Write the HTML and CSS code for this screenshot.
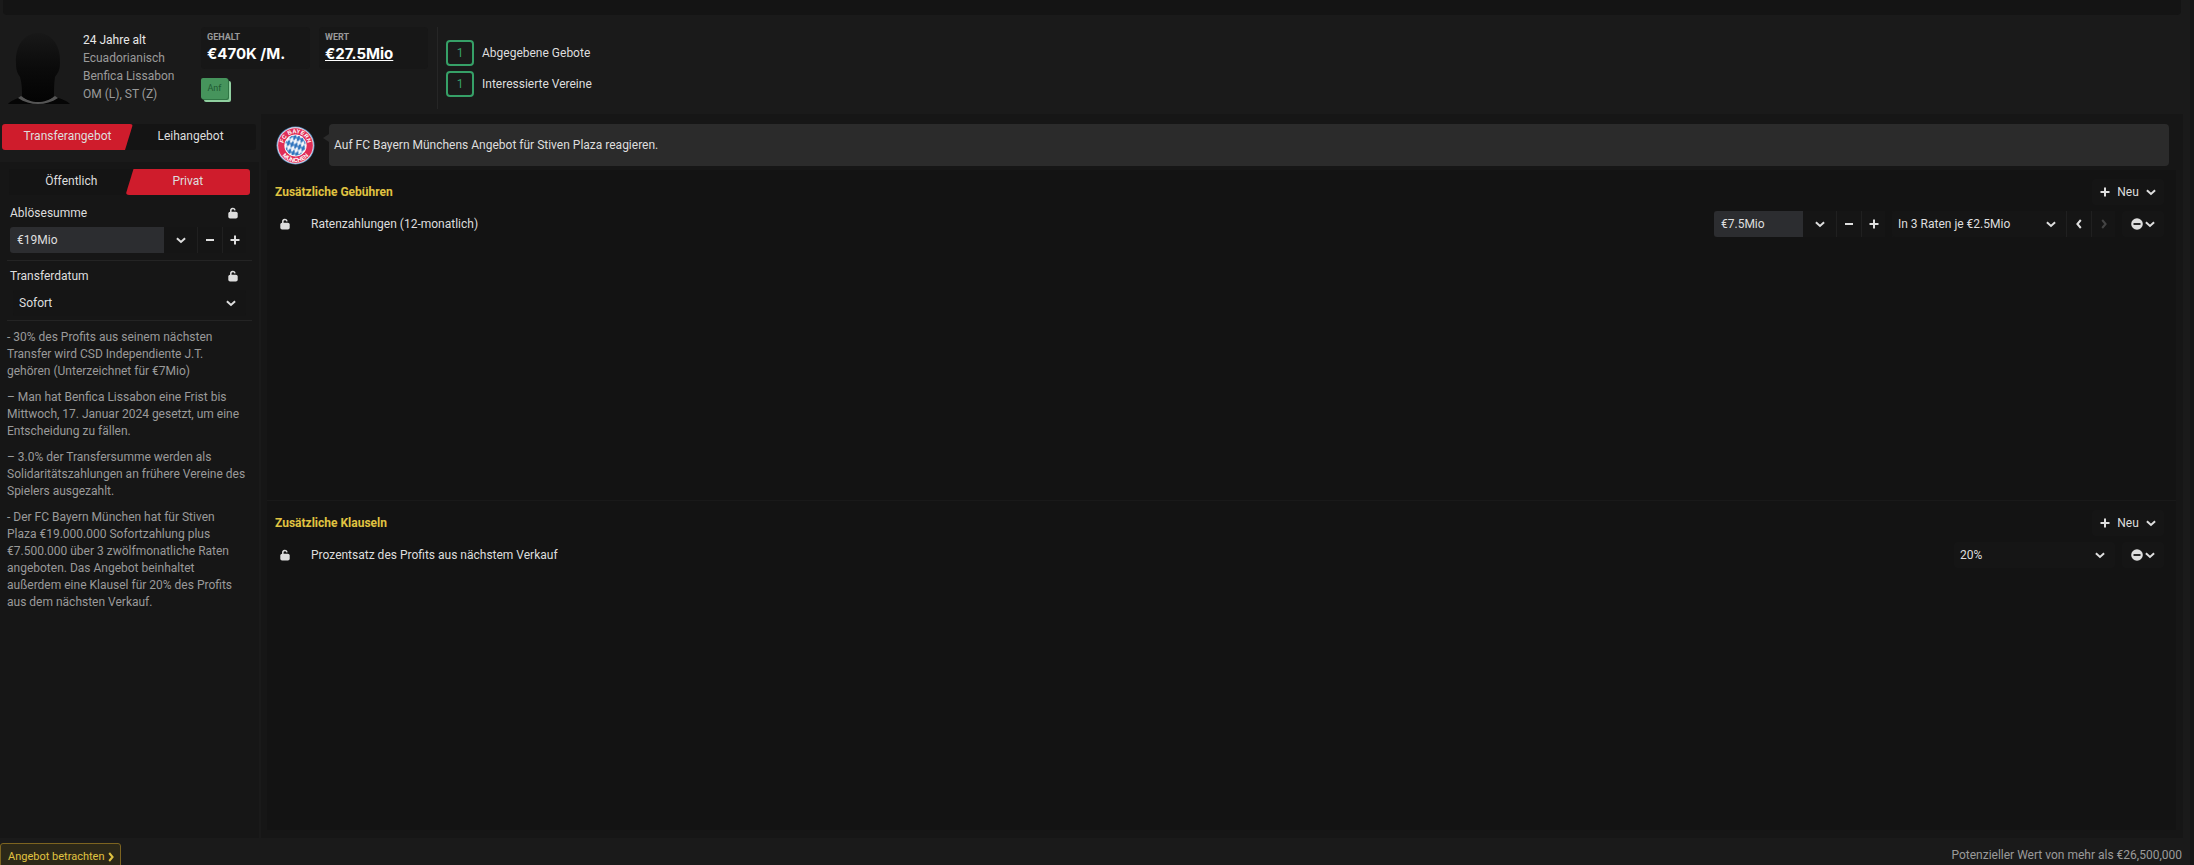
FILE: index.html
```
<!DOCTYPE html>
<html lang="de">
<head>
    <meta charset="UTF-8">
    <meta name="viewport" content="width=device-width, initial-scale=1.0">
    <title>Transferangebot</title>
    <link rel="stylesheet" href="styles.css">
</head>
<body>
    <!-- Shared icons -->
    <svg class="sprite" aria-hidden="true">
        <symbol id="chevron" viewBox="0 0 10 10"><path d="M.9 3.3 5 6.9 9.1 3.3"/></symbol>
        <symbol id="left" viewBox="0 0 10 10"><path d="M6.8 1 3.4 5 6.8 9"/></symbol>
        <symbol id="right" viewBox="0 0 10 10"><path d="M3.2 1 6.6 5 3.2 9"/></symbol>
        <symbol id="plus" viewBox="0 0 10 10"><path d="M5 .5v9M.5 5h9"/></symbol>
        <symbol id="minus" viewBox="0 0 10 10"><path d="M1 5h8"/></symbol>
        <symbol id="lock" viewBox="0 0 10 12"><rect x="0.3" y="4.8" width="9.4" height="6.7" rx="1.8" fill="currentColor" stroke="none"/><path d="M2.8 5.5V3.8a2.1 2.1 0 0 1 4.2-.4" stroke-width="1.5"/></symbol>
        <symbol id="remove" viewBox="0 0 12 12"><circle cx="6" cy="6" r="5.8" fill="currentColor" stroke="none"/><path d="M2.5 6h7" stroke="#131313" stroke-width="1.8"/></symbol>
    </svg>

    <div class="topbar"></div>

    <header class="player">
        <svg class="portrait" viewBox="0 0 62 72" aria-hidden="true">
            <defs>
                <linearGradient id="shade" x1="0" y1="0" x2="0" y2="1">
                    <stop offset="0" stop-color="#181818"/>
                    <stop offset="0.5" stop-color="#0b0b0b"/>
                    <stop offset="1" stop-color="#030303"/>
                </linearGradient>
            </defs>
            <path d="M0 71c2-3 8-5 13-7h35c5 2 12 4 14 7z" fill="#050505"/>
            <path d="M10 65c6 4 13 6 20 6s14-2 20-6l-3-2c-4 3-10 5-17 5s-13-2-17-5z" fill="#555"/>
            <path d="M8 30C7 12 17 0 30 0s23 12 22 30c0 8-3 11-5 14-1 7-1 13-1 19-4 4-10 6-16 6s-12-2-16-6c0-6 0-12-2-19-2-3-4-6-4-14z" fill="url(#shade)"/>
        </svg>
        <ul class="bio">
            <li class="bright">24 Jahre alt</li>
            <li>Ecuadorianisch</li>
            <li>Benfica Lissabon</li>
            <li>OM (L), ST (Z)</li>
        </ul>
        <div class="stats">
            <div class="stat">
                <span class="stat-label">GEHALT</span>
                <strong>€470K /M.</strong>
            </div>
            <div class="stat">
                <span class="stat-label">WERT</span>
                <a href="#">€27.5Mio</a>
            </div>
            <span class="tag">Anf</span>
        </div>
        <ul class="interest">
            <li><span class="count">1</span>Abgegebene Gebote</li>
            <li><span class="count">1</span>Interessierte Vereine</li>
        </ul>
    </header>

    <div class="content">
        <aside class="sidebar">
            <div class="tabs">
                <button class="tab first active">Transferangebot</button>
                <button class="tab">Leihangebot</button>
            </div>
            <div class="side-panel">
                <div class="tabs">
                    <button class="tab">Öffentlich</button>
                    <button class="tab last active">Privat</button>
                </div>
                <div class="field">
                    <div class="field-head">
                        <label for="fee">Ablösesumme</label>
                        <svg class="icon lock"><use href="#lock"/></svg>
                    </div>
                    <div class="stepper">
                        <input id="fee" type="text" value="€19Mio">
                        <button class="drop" aria-label="Auswählen"><svg class="icon"><use href="#chevron"/></svg></button>
                        <button aria-label="Weniger"><svg class="icon"><use href="#minus"/></svg></button>
                        <button aria-label="Mehr"><svg class="icon"><use href="#plus"/></svg></button>
                    </div>
                </div>
                <div class="field">
                    <div class="field-head">
                        <label for="date">Transferdatum</label>
                        <svg class="icon lock"><use href="#lock"/></svg>
                    </div>
                    <div class="select">
                        <select id="date"><option>Sofort</option></select>
                        <svg class="icon"><use href="#chevron"/></svg>
                    </div>
                </div>
                <div class="notes">
                    <p>- 30% des Profits aus seinem nächsten<br>Transfer wird CSD Independiente J.T.<br>gehören (Unterzeichnet für €7Mio)</p>
                    <p>– Man hat Benfica Lissabon eine Frist bis<br>Mittwoch, 17. Januar 2024 gesetzt, um eine<br>Entscheidung zu fällen.</p>
                    <p>– 3.0% der Transfersumme werden als<br>Solidaritätszahlungen an frühere Vereine des<br>Spielers ausgezahlt.</p>
                    <p>- Der FC Bayern München hat für Stiven<br>Plaza €19.000.000 Sofortzahlung plus<br>€7.500.000 über 3 zwölfmonatliche Raten<br>angeboten. Das Angebot beinhaltet<br>außerdem eine Klausel für 20% des Profits<br>aus dem nächsten Verkauf.</p>
                </div>
            </div>
        </aside>

        <main class="main">
            <div class="message">
                <svg class="crest" viewBox="0 0 40 40" role="img" aria-label="FC Bayern München">
                    <defs>
                        <pattern id="diamonds" width="4" height="8" patternUnits="userSpaceOnUse" patternTransform="rotate(20)">
                            <rect width="4" height="8" fill="#f3f6fb"/>
                            <path d="M2 0 4 4 2 8 0 4z" fill="#2f74bd"/>
                        </pattern>
                        <path id="arc-top" d="M7.4 20a12.6 12.6 0 0 1 25.2 0"/>
                        <path id="arc-bottom" d="M3 20a17 17 0 0 0 34 0"/>
                    </defs>
                    <circle cx="20" cy="20" r="19.5" fill="#5f8fc0"/>
                    <circle cx="20" cy="20" r="18.6" fill="#f2e6ea"/>
                    <circle cx="20" cy="20" r="17.8" fill="#e02c56"/>
                    <circle cx="20" cy="20" r="11.4" fill="#fff"/>
                    <circle cx="20" cy="20" r="10.6" fill="url(#diamonds)"/>
                    <text class="crest-text"><textPath href="#arc-top" startOffset="50%">FC BAYERN</textPath></text>
                    <text class="crest-text"><textPath href="#arc-bottom" startOffset="50%">MÜNCHEN</textPath></text>
                </svg>
                <p class="bubble">Auf FC Bayern Münchens Angebot für Stiven Plaza reagieren.</p>
            </div>

            <div class="clauses">
                <section class="group">
                    <div class="group-head">
                        <h2>Zusätzliche Gebühren</h2>
                        <button class="new"><svg class="icon"><use href="#plus"/></svg>Neu<svg class="icon"><use href="#chevron"/></svg></button>
                    </div>
                    <div class="clause">
                        <svg class="icon lock"><use href="#lock"/></svg>
                        <label for="instalments">Ratenzahlungen (12-monatlich)</label>
                        <div class="stepper">
                            <input id="instalments" type="text" value="€7.5Mio">
                            <button class="drop" aria-label="Auswählen"><svg class="icon"><use href="#chevron"/></svg></button>
                            <button aria-label="Weniger"><svg class="icon"><use href="#minus"/></svg></button>
                            <button aria-label="Mehr"><svg class="icon"><use href="#plus"/></svg></button>
                        </div>
                        <div class="stepper">
                            <div class="select">
                                <select aria-label="Raten"><option>In 3 Raten je €2.5Mio</option></select>
                                <svg class="icon"><use href="#chevron"/></svg>
                            </div>
                            <button aria-label="Zurück"><svg class="icon"><use href="#left"/></svg></button>
                            <button aria-label="Weiter" disabled><svg class="icon"><use href="#right"/></svg></button>
                        </div>
                        <button class="remove" aria-label="Entfernen"><svg class="icon round"><use href="#remove"/></svg><svg class="icon"><use href="#chevron"/></svg></button>
                    </div>
                </section>
                <section class="group">
                    <div class="group-head">
                        <h2>Zusätzliche Klauseln</h2>
                        <button class="new"><svg class="icon"><use href="#plus"/></svg>Neu<svg class="icon"><use href="#chevron"/></svg></button>
                    </div>
                    <div class="clause">
                        <svg class="icon lock"><use href="#lock"/></svg>
                        <label for="percent">Prozentsatz des Profits aus nächstem Verkauf</label>
                        <div class="select percent">
                            <select id="percent"><option>20%</option></select>
                            <svg class="icon"><use href="#chevron"/></svg>
                        </div>
                        <button class="remove" aria-label="Entfernen"><svg class="icon round"><use href="#remove"/></svg><svg class="icon"><use href="#chevron"/></svg></button>
                    </div>
                </section>
            </div>
        </main>
    </div>

    <footer>
        <button class="view-offer">Angebot betrachten<svg class="icon"><use href="#right"/></svg></button>
        <p>Potenzieller Wert von mehr als €26,500,000</p>
    </footer>
</body>
</html>
```
FILE: styles.css
```
* {
    box-sizing: border-box;
}

body {
    margin: 0;
    height: 100vh;
    display: flex;
    flex-direction: column;
    overflow: hidden;
    background: #1a1a1a;
    border-right: 4px solid #151515;
    color: #dedede;
    font-family: Roboto, "Liberation Sans", sans-serif;
    font-size: 12px;
    line-height: 18px;
}

ul, p, h2 {
    margin: 0;
    padding: 0;
    list-style: none;
}

button, input, select {
    margin: 0;
    padding: 0;
    border: 0;
    background: none;
    color: inherit;
    font: inherit;
    appearance: none;
}

button {
    display: flex;
    align-items: center;
    justify-content: center;
    cursor: pointer;
}

.sprite {
    display: none;
}

.icon {
    width: 10px;
    height: 10px;
    flex: none;
    fill: none;
    stroke: currentColor;
    stroke-width: 2;
}

.icon.lock {
    height: 12px;
}

.icon.round {
    width: 12px;
    height: 12px;
}

.topbar {
    flex: none;
    height: 15px;
    margin: 0 9px 0 3px;
    background: #141414;
    border-radius: 0 0 4px 4px;
}

/* Player header */
.player {
    flex: none;
    display: flex;
    align-items: flex-start;
    height: 99px;
    padding: 12px 8px 0;
}

.portrait {
    width: 62px;
    height: 72px;
    margin-top: 6px;
}

.bio {
    width: 118px;
    margin: 4px 0 0 13px;
    color: #9a9a9a;
}

.bio .bright {
    color: #e8e8e8;
}

.stats {
    display: grid;
    grid-template-columns: 109px 109px;
    gap: 9px;
}

.stat {
    height: 42px;
    padding: 3px 6px;
    background: #171717;
    border-radius: 4px;
}

.stat-label {
    display: block;
    color: #9a9a9a;
    font-size: 9px;
    font-weight: bold;
    line-height: 15px;
}

.stat strong, .stat a {
    color: #fff;
    font-family: Inter, Roboto, sans-serif;
    font-size: 15px;
    font-weight: bold;
}

.tag {
    width: 27px;
    height: 21px;
    background: #46945c;
    border-radius: 2px;
    box-shadow: 1px 1px #2f7544, 3px 3px #8fcf9f;
    color: #1f5a33;
    font-size: 9px;
    line-height: 20px;
    text-align: center;
}

.interest {
    display: grid;
    align-content: center;
    gap: 5px;
    height: 82px;
    margin-left: 9px;
    padding-left: 8px;
    border-left: 1px solid #262626;
}

.interest li {
    display: flex;
    align-items: center;
    gap: 8px;
}

.count {
    width: 28px;
    height: 26px;
    border: 2px solid #36a067;
    border-radius: 4px;
    color: #36a067;
    line-height: 22px;
    text-align: center;
}

/* Columns */
.content {
    flex: 1;
    display: flex;
    gap: 2px;
    min-height: 0;
}

.sidebar {
    flex: none;
    display: flex;
    flex-direction: column;
    width: 259px;
    padding-top: 10px;
}

.sidebar > .tabs {
    margin: 0 3px 12px 2px;
}

.side-panel {
    flex: 1;
    padding: 7px 7px 0;
    background: #161616;
}

.side-panel > .tabs {
    margin: 0 2px 7px;
}

.tabs {
    display: flex;
    background: #141414;
    border-radius: 3px;
}

.tab {
    flex: 1;
    height: 26px;
    padding-bottom: 2px;
}

.tab.active {
    background: #cf1c2c;
    border-radius: 3px;
}

.tab.first {
    margin-right: -8px;
    clip-path: polygon(0 0, 100% 0, calc(100% - 8px) 100%, 0 100%);
}

.tab.last {
    margin-left: -8px;
    clip-path: polygon(8px 0, 100% 0, 100% 100%, 0 100%);
}

.field {
    padding: 2px 6px 7px 3px;
    border-bottom: 1px solid #242424;
}

.field + .field {
    padding-top: 6px;
    padding-bottom: 4px;
}

.field-head {
    display: flex;
    align-items: center;
    justify-content: space-between;
    height: 18px;
    margin: 0 8px 5px 0;
}

.field .select {
    margin-left: 3px;
}

.stepper {
    display: flex;
    height: 26px;
    background: #151515;
}

.stepper input {
    flex: 1;
    min-width: 0;
    padding-left: 7px;
    background: #2c2d30;
    border-radius: 3px 0 0 3px;
}

.stepper button {
    width: 25px;
    border-left: 1px solid #202020;
}

.stepper button:last-child {
    width: 24px;
}

.stepper .drop {
    width: 33px;
    border-left: 0;
}

.stepper button:disabled {
    color: #444;
}

.select {
    display: grid;
    align-items: center;
    height: 26px;
    background: #151515;
    border-radius: 3px;
}

.select select, .select .icon {
    grid-area: 1 / 1;
}

.select select {
    height: 26px;
    padding-left: 6px;
}

.select .icon {
    justify-self: end;
    margin-right: 10px;
    pointer-events: none;
}

.notes {
    display: grid;
    gap: 9px;
    padding: 8px 0;
    color: #9a9a9a;
    line-height: 17px;
    white-space: nowrap;
}

/* Offer details */
.main {
    flex: 1;
    display: flex;
    flex-direction: column;
    margin-right: 7px;
    padding: 10px 7px 8px 6px;
    background: #161616;
}

.message {
    display: flex;
    align-items: center;
    gap: 14px;
    margin: 0 7px 4px 9px;
}

.crest {
    flex: none;
    width: 39px;
    height: 39px;
}

.crest-text {
    fill: #fff;
    font-family: "Liberation Sans", sans-serif;
    font-size: 6px;
    font-weight: bold;
    text-anchor: middle;
}

.bubble {
    flex: 1;
    position: relative;
    padding: 12px 5px;
    background: #2b2b2b;
    border-radius: 4px;
}

.bubble::before {
    content: '';
    position: absolute;
    top: 10px;
    left: -6px;
    border: solid transparent;
    border-width: 4px 6px 4px 0;
    border-right-color: #2b2b2b;
}

.clauses {
    flex: 1;
    display: flex;
    flex-direction: column;
    background: #131313;
}

.group {
    flex: 1;
    padding: 9px 12px 0 8px;
}

.group + .group {
    border-top: 1px solid #191919;
}

.group-head {
    display: flex;
    align-items: center;
    justify-content: space-between;
    margin-bottom: 6px;
}

.group-head h2 {
    color: #e0c341;
    font-size: 12px;
    font-weight: bold;
}

.new {
    gap: 7px;
    width: 72px;
    height: 26px;
    background: #151515;
    border-radius: 3px;
}

.clause {
    display: flex;
    align-items: center;
    gap: 7px;
    padding-left: 5px;
}

.clause label {
    flex: 1;
    padding-left: 14px;
}

.clause .stepper input {
    flex: none;
    width: 89px;
}

.clause .stepper .select {
    width: 174px;
}

.percent {
    width: 161px;
}

.remove {
    gap: 2px;
    width: 42px;
    height: 26px;
    background: #151515;
    border-radius: 3px;
}

/* Bottom bar */
footer {
    flex: none;
    display: flex;
    justify-content: space-between;
    height: 27px;
    padding: 5px 8px 0 0;
    color: #9a9a9a;
}

footer p {
    line-height: 24px;
}

.view-offer {
    gap: 2px;
    height: 28px;
    padding: 0 4px 0 7px;
    background: #2c2818;
    border: 1px solid #7d6420;
    border-radius: 3px;
    color: #e0c341;
    font-size: 11px;
}
```
